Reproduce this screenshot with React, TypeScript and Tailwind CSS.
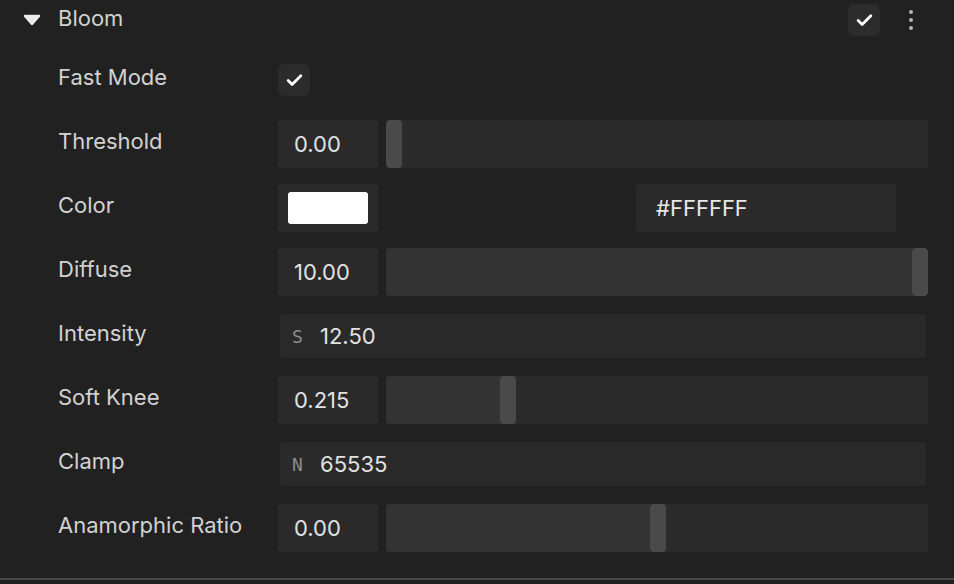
import React from "react";
import { Check } from "lucide-react";

const font = { fontFamily: "Inter, 'Noto Sans', sans-serif" };

function Label({ children }: { children: React.ReactNode }) {
  return <div className="w-[220px] shrink-0 text-[22px] text-[#d2d2d2] leading-none -mt-[6px]">{children}</div>;
}

function NumBox({ value }: { value: string }) {
  return (
    <div className="w-[100px] h-[48px] rounded-[4px] bg-[#2a2a2a] flex items-center pl-4 text-[22px] text-[#e2e2e2] shrink-0">
      {value}
    </div>
  );
}

function Slider({ pos }: { pos: number }) {
  return (
    <div className="ml-2 flex-1 h-[48px] rounded-[4px] bg-[#2b2b2b] relative overflow-hidden flex">
      <div className="h-full bg-[#333333]" style={{ width: pos }} />
      <div className="h-full w-4 rounded-[4px] bg-[#4a4a4a] shrink-0" />
    </div>
  );
}

function Row({ children }: { children: React.ReactNode }) {
  return <div className="flex items-center h-[48px] pl-[58px] pr-[26px]">{children}</div>;
}

function PrefField({ prefix, value }: { prefix: string; value: string }) {
  return (
    <div className="ml-[2px] mr-[2px] flex-1 h-[44px] rounded-[4px] bg-[#2a2a2a] flex items-center pl-[12px]">
      <span className="text-[18px] text-[#8c8c8c] w-[28px]" style={{ fontFamily: "'DejaVu Sans Mono', monospace" }}>{prefix}</span>
      <span className="text-[22px] text-[#e2e2e2]">{value}</span>
    </div>
  );
}

export default function App() {
  return (
    <div className="w-[954px] h-[584px] bg-[#212121] relative overflow-hidden" style={font}>
      <div className="flex items-center h-[40px] pr-[26px]">
        <div className="w-[58px] flex pl-[23px]">
          <svg width="18" height="12" viewBox="0 0 18 12">
            <path d="M2 2 L16 2 L9 10 Z" fill="#ececec" stroke="#ececec" strokeWidth="2.5" strokeLinejoin="round" />
          </svg>
        </div>
        <div className="flex-1 text-[22px] text-[#d2d2d2] leading-none -mt-[5px]">Bloom</div>
        <div className="w-8 h-8 rounded-[6px] bg-[#2c2c2c] flex items-center justify-center mr-[29px]">
          <Check size={19} strokeWidth={3.5} color="#ffffff" />
        </div>
        <div className="flex flex-col gap-[4px] mr-[15px]">
          <div className="w-[4px] h-[4px] rounded-full bg-[#b5b5b5]" />
          <div className="w-[4px] h-[4px] rounded-full bg-[#b5b5b5]" />
          <div className="w-[4px] h-[4px] rounded-full bg-[#b5b5b5]" />
        </div>
      </div>
      <div className="flex flex-col gap-4 mt-4">
        <Row>
          <Label>Fast Mode</Label>
          <div className="w-8 h-8 rounded-[6px] bg-[#2c2c2c] flex items-center justify-center">
            <Check size={19} strokeWidth={3.5} color="#ffffff" />
          </div>
        </Row>
        <Row>
          <Label>Threshold</Label>
          <NumBox value="0.00" />
          <Slider pos={0} />
        </Row>
        <Row>
          <Label>Color</Label>
          <div className="w-[100px] h-[48px] rounded-[4px] bg-[#2a2a2a] flex items-center justify-center shrink-0">
            <div className="w-[80px] h-[32px] rounded-[3px] bg-white" />
          </div>
          <div className="ml-[258px] w-[260px] h-[48px] rounded-[4px] bg-[#2a2a2a] flex items-center pl-5 text-[22px] text-[#e8e8e8]">
            #FFFFFF
          </div>
        </Row>
        <Row>
          <Label>Diffuse</Label>
          <NumBox value="10.00" />
          <Slider pos={526} />
        </Row>
        <Row>
          <Label>Intensity</Label>
          <PrefField prefix="S" value="12.50" />
        </Row>
        <Row>
          <Label>Soft Knee</Label>
          <NumBox value="0.215" />
          <Slider pos={114} />
        </Row>
        <Row>
          <Label>Clamp</Label>
          <PrefField prefix="N" value="65535" />
        </Row>
        <Row>
          <Label>Anamorphic Ratio</Label>
          <NumBox value="0.00" />
          <Slider pos={264} />
        </Row>
      </div>
      <div className="absolute left-0 right-0 top-[578px] h-[2px] bg-[#474747]" />
    </div>
  );
}
